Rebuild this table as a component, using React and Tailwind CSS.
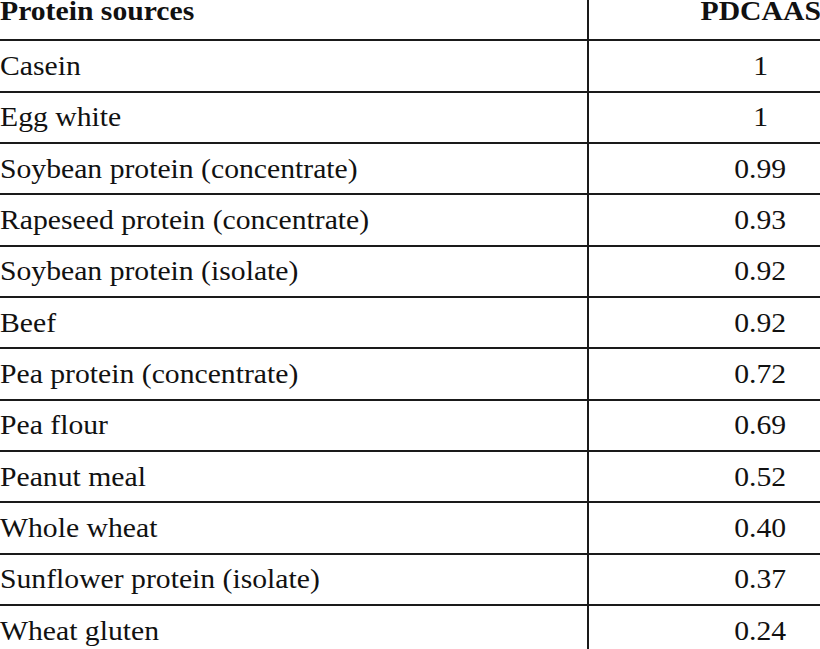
export default function App() {
  const rows = [
    ["Casein", "1"],
    ["Egg white", "1"],
    ["Soybean protein (concentrate)", "0.99"],
    ["Rapeseed protein (concentrate)", "0.93"],
    ["Soybean protein (isolate)", "0.92"],
    ["Beef", "0.92"],
    ["Pea protein (concentrate)", "0.72"],
    ["Pea flour", "0.69"],
    ["Peanut meal", "0.52"],
    ["Whole wheat", "0.40"],
    ["Sunflower protein (isolate)", "0.37"],
    ["Wheat gluten", "0.24"],
  ];
  return (
    <div className="w-[820px] h-[649px] overflow-hidden bg-white text-[#111] font-['Liberation_Serif',serif] text-[26.5px] leading-[30px]">
      <div className="w-[932px]">
        <div className="flex h-[39.3px] font-bold leading-[22px]">
          <div className="w-[587px]">
            <span className="inline-block origin-left scale-x-[1.12]">Protein sources</span>
          </div>
          <div className="flex-1 border-l-2 border-[#1a1a1a] text-center">
            <span className="inline-block origin-center scale-x-[1.12]">PDCAAS</span>
          </div>
        </div>
        {rows.map(([name, val]) => (
          <div key={name} className="flex h-[51.34px] border-t-2 border-[#1a1a1a]">
            <div className="w-[587px] flex items-center">
              <span className="inline-block origin-left scale-x-[1.12]">{name}</span>
            </div>
            <div className="flex-1 border-l-2 border-[#1a1a1a] flex items-center justify-center">
              <span className="inline-block origin-center scale-x-[1.12]">{val}</span>
            </div>
          </div>
        ))}
      </div>
    </div>
  );
}
